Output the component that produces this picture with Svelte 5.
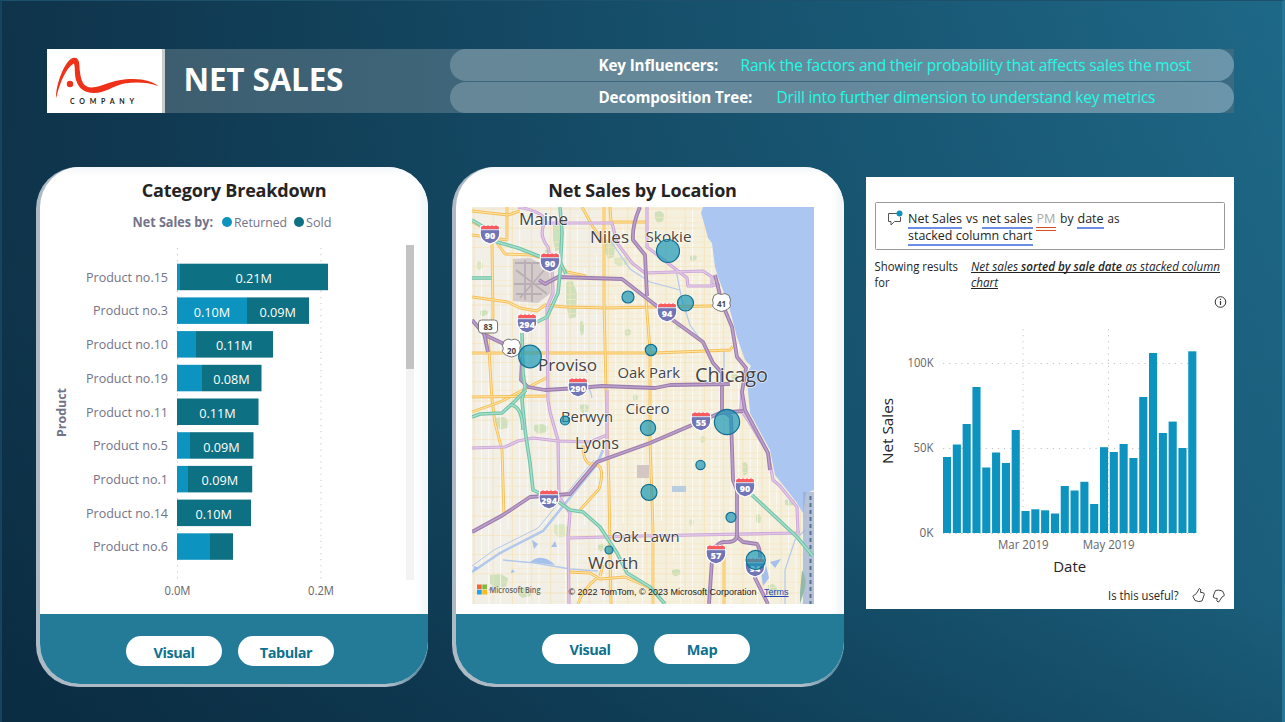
<script>
  const products = [
    { name: 'Product no.15', len: 82, ret: 3, end: 151, label: '0.21M' },
    { name: 'Product no.3', len: 75, ret: 70, end: 132, retLabel: '0.10M', label: '0.09M' },
    { name: 'Product no.10', len: 82, ret: 19, end: 96, label: '0.11M' },
    { name: 'Product no.19', len: 82, ret: 25, end: 84.5, label: '0.08M' },
    { name: 'Product no.11', len: 82, ret: 0, end: 81.5, label: '0.11M' },
    { name: 'Product no.5', len: 75, ret: 13, end: 76.5, label: '0.09M' },
    { name: 'Product no.1', len: 75, ret: 11, end: 75.2, label: '0.09M' },
    { name: 'Product no.14', len: 82, ret: 0, end: 74, label: '0.10M' },
    { name: 'Product no.6', len: 75, ret: 33, end: 56, label: '' },
  ];

  const tops = [457, 444.5, 424, 387, 467.5, 452.5, 463, 430, 511, 509.3, 510.3, 513.5, 486, 490.5, 481.8, 504, 447.2, 452, 444, 458, 397, 353, 433, 421.6, 448, 351.3];

  const streetsV = Array.from({ length: 54 }, (_, i) => ({ x: 474 + i * 6.4 + ((i * 7) % 3), y1: 207 + ((i * 53) % 120) * (i % 3 ? 1 : 0), y2: 604 - ((i * 37) % 110) * (i % 2) }));
  const streetsH = Array.from({ length: 62 }, (_, i) => ({ y: 209 + i * 6.4 + ((i * 5) % 3), x1: 472 + ((i * 61) % 130) * (i % 3 ? 1 : 0), x2: 814 - ((i * 41) % 120) * (i % 2) }));

  const parks = [
    [553, 225, 8, 28], [566, 282, 11, 40], [605, 240, 10, 20], [614, 258, 16, 8], [480, 311, 8, 5], [496, 418, 13, 12],
    [534, 425, 14, 9], [554, 525, 15, 13], [490, 575, 18, 14], [518, 588, 14, 10], [506, 340, 7, 4], [676, 325, 6, 4],
    [655, 212, 9, 11], [690, 256, 7, 5], [742, 463, 6, 13], [700, 437, 6, 6], [756, 515, 5, 9], [731, 375, 8, 5],
    [580, 405, 9, 8], [689, 520, 5, 6], [768, 585, 9, 13], [785, 500, 10, 6], [625, 330, 6, 6], [477, 262, 6, 8],
    [545, 250, 5, 20], [598, 545, 8, 6], [672, 570, 9, 6], [700, 590, 8, 6], [633, 395, 5, 6], [580, 322, 4, 14],
  ];

  const yellow = [
    'M492 243 L493 317 L488 333 L492 400 L495 423 L502 450 L504 516',
    'M507 207 V240 L472 235', 'M472 211 L508 215 L520 211',
    'M497 243 L505 254 L532 255 L558 263 L567 272 L586 276',
    'M472 297 L508 302 L520 308 L537 311 L545 305 L565 307 L608 308 L655 307 L712 306',
    'M472 353 H655 L730 350 L733 346',
    'M582 207 L593 227 L604 242', 'M610 207 L611 222 H648',
    'M604 207 L604 300 L606 390 L609 490 L611 604',
    'M646 300 L650 350 L650 440 L653 530 L653 604',
    'M472 412 L500 402 L548 377', 'M472 397 L547 396',
    'M583 445 Q583 466 594 464 Q606 465 599 489 L580 510',
    'M568 572 L590 573 L600 579 L625 577 L650 588', 'M597 578 Q582 590 578 604', 'M600 576 L603 565',
    'M724 545 V604', 'M472 222 L492 232',
  ];
  const light = [
    'M518 207 Q545 212 545 222 Q538 235 548 247 L552 268 L553 293 L547 307 L548 400 L550 412 L558 440 L559 497 L570 513 L568 537 L569 604',
    'M472 448 L505 447 L518 441 L533 438 L558 441 L590 442 L607 435',
    'M570 538 L640 536 L800 533',
    'M547 223 H612 L617 243 L632 263 L645 273 L703 271 L712 277 V286 H688 L687 278 L660 257 L647 247 V207',
    'M712 285 H720', 'M607 390 V460',
    'M742 390 L741 410 L748 420 L768 453 L773 480 L780 486 L797 507 L798 533',
  ];
  const purple = [
    'M640 207 Q632 225 633 240 L645 255 L647 296',
    'M539 280 L545 284 L558 277 L622 279 L645 297 L658 307 L670 318 L703 342 L713 363 L722 373 L722 410 L731 417 L733 480 L737 490 L737 537 L743 542 L757 544 Q764 555 755 578 L768 604',
    'M715 275 L722 303 L732 327 L737 357 L746 368 L742 392 L745 410 L768 453 L770 470',
    'M472 320 L485 335 L502 343 L515 355', 'M484 333 L488 352',
    'M522 357 L521 380 L528 387 L545 390 L578 388 L602 386 L655 388 L670 385 L730 384',
    'M472 532 L503 515 L530 497 L570 494 L597 462 L650 443 L720 413 L743 411',
    'M737 535 Q737 543 724 542 Q714 543 712 560 L709 604',
  ];
  const teal = [
    'M472 220 L490 231 L497 242 L518 248 L541 257',
    'M560 207 L562 233 L560 273 L558 293 L547 317 L537 322',
    'M560 262 L566 274', 'M472 278 H492',
    'M522 333 L523 373 L525 387 L522 400 L525 430 L530 463 L533 490 L560 503 L570 510 L583 512 L600 527 L617 553 L627 573 L650 587 L665 604',
    'M472 417 L480 414 L502 413 L513 403 L526 390', 'M510 405 Q522 405 523 430',
    'M752 495 L797 537 L813 556',
  ];
  const places = [
    ['Maine', 519, 225, 17, 49], ['Niles', 590, 243, 17, 39], ['Skokie', 645.5, 242, 14.5, 46],
    ['Proviso', 538, 371, 17, 59], ['Oak Park', 617.5, 378, 14.5, 62.5], ['Chicago', 695, 382, 20, 73],
    ['Cicero', 625.5, 414, 14.5, 44], ['Berwyn', 561, 422, 14.5, 52], ['Lyons', 575, 449, 17, 44],
    ['Oak Lawn', 611.5, 542, 14.5, 68], ['Worth', 588, 569, 17, 50.5],
  ];
  const shields = [[490, 234, '90'], [550, 262, '90'], [527, 323, '294'], [667, 312, '94'], [578, 387, '290'], [701, 421, '55'], [549, 499, '294'], [745, 487, '90'], [716, 554, '57'], [755, 567, '94']];
  const bubbles = [[668, 251, 11.5], [628, 297, 6], [685.5, 303, 8], [530, 356.5, 11.3], [651, 350, 5.7], [727, 422, 12.6], [565, 420.5, 4.5], [648, 428, 7.6], [700.5, 465, 4.6], [649, 492.3, 8], [731, 517.3, 5], [609, 550, 4], [755.7, 560, 9.6]];
</script>

{#snippet label(text, x, y, size, len, anchor, cls)}
  <text {x} {y} font-size={size} textLength={len} lengthAdjust="spacingAndGlyphs" text-anchor={anchor} class={cls}>{text}</text>
{/snippet}

<div class="page">
  <header>
    <div class="logo">
      <svg width="118" height="64" viewBox="47 49 118 64">
        <path d="M56.200 98 C55 87 65 57.700 74.300 57.700 C80.500 57.700 79 66 80 72 C81 81 83.500 87.500 91.700 87.500 C103 87 112 79 133 79 C145 79 153 82 158.500 86 C147 82 136 81.700 124 83.500 C112 86.500 105 93 94 93 C84 93 78.500 88 76 80 C74.200 74 75.500 66 73.800 63.500 C66 68 60 82 56.200 98Z" fill="#ee3118" />
        <circle cx="70" cy="84" r="3.200" fill="#ee3118" />
        <text x="70" y="104" font-size="7" textLength="64" class="company">COMPANY</text>
        <rect x="162" y="49" width="3" height="64" fill="#c9cacc" />
      </svg>
    </div>
    <h1>NET SALES</h1>
    <div class="pills">
      <p><b style="width:142px">Key Influencers:</b><span class="first">Rank the factors and their probability that affects sales the most</span></p>
      <p><b style="width:178px">Decomposition Tree:</b><span class="second">Drill into further dimension to understand key metrics</span></p>
    </div>
  </header>

  <main>
    <section class="card">
      <div class="inner">
        <div class="body">
          <h2 class="cat">Category Breakdown</h2>
          <svg width="388" height="407" viewBox="40 207 388 407">
            {@render label('Net Sales by:', 132.500, 227, 13.300, 80.500, 'start', 'muted bold')}
            <circle cx="227" cy="222" r="5" fill="#0d93bf" />
            {@render label('Returned', 234, 227, 13, 53, 'start', 'muted')}
            <circle cx="299" cy="222" r="5" fill="#0d7083" />
            {@render label('Sold', 306, 227, 13, 25.500, 'start', 'muted')}
            <path d="M177.500 248 V581 M321 248 V581" stroke="#c4c4c4" stroke-dasharray="1.200 4.900" />
            {#each products as p, i}
              {@const y = 263.700 + i * 33.700}
              {@render label(p.name, 168, y + 18, 13, p.len, 'end', 'muted')}
              <rect x="177" {y} width={p.ret} height="26.500" fill="#0d93bf" />
              <rect x={177 + p.ret} {y} width={p.end - p.ret} height="26.500" fill="#0d7083" />
              {#if p.retLabel}{@render label(p.retLabel, 212, y + 19.300, 12.700, 36.500, 'middle', 'white')}{/if}
              {#if p.label}{@render label(p.label, 176.700 + (p.ret + p.end) / 2, y + 19.300, 12.700, 36.500, 'middle', 'white')}{/if}
            {/each}
            {@render label('0.0M', 177.500, 595, 12, 26, 'middle', 'muted axis')}
            {@render label('0.2M', 321, 595, 12, 26, 'middle', 'muted axis')}
            <text transform="translate(66 437) rotate(-90)" font-size="13" textLength="49" lengthAdjust="spacingAndGlyphs" class="muted bold">Product</text>
            <rect x="406" y="245" width="8" height="335" fill="#f3f3f3" />
            <rect x="406" y="245" width="8" height="124" fill="#c3c3c3" />
          </svg>
        </div>
        <footer class="foot-a"><button>Visual</button><button>Tabular</button></footer>
      </div>
    </section>

    <section class="card">
      <div class="inner">
        <div class="body">
          <h2 class="loc">Net Sales by Location</h2>
          <svg class="map" width="342" height="397" viewBox="472 207 342 397">
            <rect x="472" y="207" width="342" height="397" fill="#f2efe6" />
            <path d="M600 207 H710 L800 520 V604 H620Z" fill="#f7f0da" opacity=".7" />
            {#each parks as [x, y, w, h], i}
              <path d="M{x} {y} l{w * .6} -1 l{w * .4} {h * .3} l{-w * .1} {h * .6} l{-w * .6} 2 l{-w * .3} {-h * .4}z" fill={i % 4 === 3 ? '#d7e4bc' : '#c9ddb4'} opacity=".85" />
            {/each}
            {#each streetsV as s, i}
              <path d="M{s.x} {s.y1} V{s.y2}" stroke={i % 3 ? '#ffffff' : '#f6e2b4'} stroke-width=".9" opacity=".85" />
            {/each}
            {#each streetsH as s, i}
              <path d="M{s.x1} {s.y} H{s.x2}" stroke={i % 3 ? '#f7e8c4' : '#f6e2b4'} stroke-width=".8" opacity=".85" />
            {/each}
            <path d="M513 259 L530 258 L549 268 L551 293 L538 303 L513 301Z" fill="#d4cbcb" />
            <path d="M515 263 H545 M516 270 L547 294 M520 298 L546 268 M525 260 V300 M514 284 H548 M532 262 V302 M516 294 H542" stroke="#b9aeb3" stroke-width="1.800" fill="none" />
            <path d="M672 486 h14 v6 h-14z" fill="#b9cde0" /><path d="M637 465 h12 v13 h-12z" fill="#d3c6c5" />
            <g fill="none" stroke="#b3c9ec">
              <path d="M472 572 L500 553 L543 531 L597 464 L603 450" stroke-width="2.600" />
              <path d="M472 566 L494 550 L538 528 L594 460" stroke-width="1" />
              <path d="M503 560 L535 563 L570 569 L598 571" stroke-width="1.500" />
              <path d="M577 390 q8 6 10 0 t5 8 M579 364 q8 4 8 9 M676 270 L682 300 L690 325 L708 350 M610 240 L630 269 L650 282 L680 290 M724 350 V370 M785 604 V570 L795 540 L805 530" stroke-width="1.200" />
            </g>
            <path d="M530 562 Q542 552 555 565Z M532 540 l6 4 -4 5z M551 547 l4 -6 2 6z M512 569 l3 3 -4 1z M474 566 l5 2 -6 4z M488 590 l5 -4 1 5z M765 560 l4 18 -6 8 -2 -14z M770 562 l11 -3 -6 9z" fill="#a5c0eb" />
            <path d="M703 207 L701 213 L704 223 L708 238 L712 243 L715 267 L718 277 L728 303 L737 337 L745 360 L751 366 L746 375 L748 390 L750 413 L770 450 L775 475 L787 490 L797 503 L803 513 L806 493 L814 490 V207Z" fill="#abc6f1" />
            <path d="M803 492 H814 V604 H803Z" fill="#93aad2" opacity=".65" />
            <path d="M802 570 q5 8 3 18 l-5 16 v-12z" fill="#94b9a9" />
            <path d="M810.500 496 V604" stroke="#5e7190" stroke-width="2" stroke-dasharray="4 3" />
            <g fill="none" stroke-linejoin="round">
              {#each yellow as d}<path {d} stroke="#f5bf58" stroke-width="2.900" /><path {d} stroke="#ffe6a8" stroke-width="1.100" />{/each}
              {#each light as d}<path {d} stroke="#c9a5d4" stroke-width="3.200" /><path {d} stroke="#e2c6e8" stroke-width="1.500" />{/each}
              {#each purple as d}<path {d} stroke="#9b7dac" stroke-width="3.800" /><path {d} stroke="#bd9fcb" stroke-width="1.700" />{/each}
              {#each teal as d}<path {d} stroke="#71c2a9" stroke-width="3.600" /><path {d} stroke="#a5dfca" stroke-width="1.500" />{/each}
            </g>
            {#each shields as [x, y, n]}
              <g transform="translate({x} {y})">
                <path d="M-9 -8 Q-5 -9 0 -8 Q5 -9 9 -8 Q12 4 5 8 L0 10 L-5 8 Q-12 4 -9 -8Z" fill="#7175b5" stroke="#fff" stroke-width="1.300" />
                <path d="M-8.500 -7.500 L-6 -8.800 L-4 -7.800 L-2 -8.800 L0 -7.800 L2 -8.800 L4 -7.800 L6 -8.800 L8.500 -7.500 L9 -4.700 H-9Z" fill="#fb5a5c" />
                <path d="M-9 -4.300 H9" stroke="#fff" stroke-width=".8" />
                <text y="4.500" text-anchor="middle" class="route">{n}</text>
              </g>
            {/each}
            <rect x="478.500" y="320" width="19" height="13" rx="3" class="sign" /><text x="488" y="330" class="us">83</text>
            <path d="M504 341 l4 -2 3.500 1 3.500 -1 4 2 1.500 4.500 q-1.500 3 0 6 q-2 4 -9 5.500 q-7 -1.500 -9 -5.500 q1.500 -3 0 -6z" class="sign" /><text x="511.500" y="353.500" class="us">20</text>
            <path d="M714 295.500 l4 -2 3.500 1 3.500 -1 4 2 1.500 4.500 q-1.500 3 0 6 q-2 4 -9 5.500 q-7 -1.500 -9 -5.500 q1.500 -3 0 -6z" class="sign" /><text x="721.500" y="307" class="us">41</text>
            {#each places as [name, x, y, size, len]}{@render label(name, x, y, size, len, 'start', 'place')}{/each}
            {#each bubbles as [x, y, r]}<circle cx={x} cy={y} {r} fill="#1396b7" fill-opacity=".68" stroke="#136f91" stroke-width="1.200" />{/each}
            <rect x="477" y="584.500" width="4.700" height="4.700" fill="#f1653a" /><rect x="482.300" y="584.500" width="4.700" height="4.700" fill="#80b93c" />
            <rect x="477" y="589.800" width="4.700" height="4.700" fill="#18a5ed" /><rect x="482.300" y="589.800" width="4.700" height="4.700" fill="#fcbb16" />
            {@render label('Microsoft Bing', 489.500, 593, 9, 51, 'start', 'bing')}
            {@render label('© 2022 TomTom, © 2023 Microsoft Corporation', 568.500, 595, 9, 188, 'start', 'copy')}
            {@render label('Terms', 764, 595, 9, 24.500, 'start', 'copy terms')}
            <path d="M764 596.500 h24.500" stroke="#2846b3" />
          </svg>
        </div>
        <footer class="foot-b"><button>Visual</button><button>Map</button></footer>
      </div>
    </section>

    <section class="qna">
      <svg width="368" height="432" viewBox="866 177 368 432">
        <rect x="875.500" y="202.500" width="349" height="47" rx="1" fill="#fff" stroke="#999" />
        <path d="M897 213.500 H888.500 V221.500 H891 V225 L894.500 221.500 H900.500 V217" fill="none" stroke="#555" />
        <circle cx="899.500" cy="213.500" r="3" fill="#0d93bf" />
        {@render label('Net Sales', 908, 223, 13.300, 54, 'start', 'dark')}
        {@render label('vs', 966, 223, 13.300, 12, 'start', 'dark')}
        {@render label('net sales', 982, 223, 13.300, 50.500, 'start', 'dark')}
        {@render label('PM', 1036.500, 223, 13.300, 19, 'start', 'pale')}
        {@render label('by', 1060, 223, 13.300, 13.500, 'start', 'dark')}
        {@render label('date', 1077.500, 223, 13.300, 26, 'start', 'dark')}
        {@render label('as', 1107.500, 223, 13.300, 12, 'start', 'dark')}
        {@render label('stacked column chart', 908, 240, 13.300, 124.500, 'start', 'dark')}
        <path d="M908 228 h54 M982 228 h51 M1077 228 h27 M908 245 h125" stroke="#6b8ee6" stroke-width="2" />
        <path d="M1036 227.500 h20 M1036 230.500 h20" stroke="#d64e1f" />
        {@render label('Showing results', 874.500, 271, 12, 83.500, 'start', 'dark')}
        {@render label('for', 874.500, 287, 12, 15, 'start', 'dark')}
        {@render label('Net sales', 971, 271, 12, 47, 'start', 'dark ital')}
        {@render label('sorted by sale date', 1021, 271, 12, 101, 'start', 'dark ital semi')}
        {@render label('as stacked column', 1125.500, 271, 12, 94.500, 'start', 'dark ital')}
        {@render label('chart', 971, 287, 12, 27, 'start', 'dark ital')}
        <path d="M971 272.500 h249 M971 288.500 h27" stroke="#252423" />
        <circle cx="1220.500" cy="302" r="5.300" fill="none" stroke="#333" />
        <path d="M1220.500 301 v4 M1220.500 298.800 v1.200" stroke="#333" stroke-width="1.200" />

        <path d="M943 363.500 H1197 M943 448.500 H1197 M943 533.500 H1197 M1023 329 V533 M1108.500 329 V533" stroke="#c4c4c4" stroke-dasharray="1.200 4.900" />
        {#each tops as top, i}<rect x={943 + i * 9.810} y={top} width="8.100" height={533 - top} fill="#0d93bf" />{/each}
        {@render label('100K', 933.500, 367, 12, 26, 'end', 'tick')}
        {@render label('50K', 933.500, 452, 12, 20, 'end', 'tick')}
        {@render label('0K', 933.500, 537, 12, 14, 'end', 'tick')}
        {@render label('Mar 2019', 1023.300, 549, 12, 50.500, 'middle', 'tick')}
        {@render label('May 2019', 1108.700, 549, 12, 52, 'middle', 'tick')}
        {@render label('Date', 1069.700, 572, 15, 33, 'middle', 'dark')}
        <text transform="translate(893 464) rotate(-90)" font-size="15" textLength="66" lengthAdjust="spacingAndGlyphs" class="dark">Net Sales</text>
        {@render label('Is this useful?', 1108, 600, 12, 70.500, 'start', 'dark')}
        <path d="M1193 596.500 L1195 600.500 Q1199 602.300 1202 601 L1204.300 594.500 Q1204.500 592.500 1202 592.500 H1200.500 Q1201.500 589.500 1199.500 588.500 Q1198.500 588.500 1198 591 L1195.500 594.500 L1193.300 595.500Z" fill="none" stroke="#444" />
        <path d="M1224 594 L1222.500 591 Q1218.500 589.500 1215.500 590.500 L1213.300 596 Q1213 598 1215.500 598.300 H1217.200 Q1216 601.500 1218 602 Q1219.500 602 1220 600 L1222 597 L1224.300 595.500Z" fill="none" stroke="#444" />
      </svg>
    </section>
  </main>
</div>

<style>
  :global(body) { margin: 0; overflow: hidden; }
  .page {
    box-sizing: border-box; width: 1285px; height: 722px; padding: 48px 0 0 45px;
    border-top: 1px solid #1d506b; border-right: 3px solid #25779a; border-left: 2px solid #16445e;
    font-family: "Open Sans", "Noto Sans", sans-serif;
    background: linear-gradient(192deg, #1f6e8f00 0%, #092a3f30 60%, #08273cb0 100%), linear-gradient(96deg, #0f344b 0%, #17536f 52%, #1f6b8a 100%);
  }
  header { display: flex; width: 1187px; height: 64px; background: linear-gradient(90deg, #3c5b6b, #3f677c 40%, #3a6b83); }
  .logo { width: 118px; height: 64px; background: #fff; }
  .company { font-family: Lato, sans-serif; font-weight: 700; fill: #222; }
  h1 { box-sizing: border-box; margin: 0; width: 266px; padding: 8px 0 0 18.500px; font-size: 31.500px; line-height: 44px; color: #fff; letter-spacing: -.2px; font-weight: 700; white-space: nowrap; }
  .pills { display: flex; flex-direction: column; gap: 1px; margin-left: auto; flex: none; width: 784px; }
  .pills p { box-sizing: border-box; display: flex; height: 31.500px; margin: 0; padding-left: 148.500px; border-radius: 16px; background: linear-gradient(90deg, #658797, #65899c 50%, #6b95aa); line-height: 32px; white-space: nowrap; }
  .pills p:last-child { line-height: 30px; }
  .pills b { color: #fff; font-size: 15.200px; letter-spacing: -.12px; }
  .pills span { color: #21fbe3; font-size: 15.500px; }
  .first { letter-spacing: -.18px; }
  .second { letter-spacing: -.21px; }
  main { display: flex; align-items: flex-start; margin: 54px 0 0 -11px; }
  .card { box-sizing: border-box; width: 392px; height: 520px; padding: 0 0 3px 4px; margin-right: 24px; background: linear-gradient(90deg, #adb9c4, #aebdc9 90%, #477d93); border-radius: 42px; flex: none; }
  .inner { height: 517px; overflow: hidden; border-radius: 40px 40px 42px 40px; background: #fff; }
  .body { height: 447px; overflow: hidden; box-shadow: inset -8px 5px 6px #f3f7fa; }
  h2 { margin: 0; height: 40px; line-height: 46px; text-align: center; font-size: 18px; color: #252423; font-weight: 700; letter-spacing: -.18px; }
  .loc { padding-right: 15px; }
  .map { display: block; margin-left: 16px; }
  footer { display: flex; gap: 16px; height: 70px; box-sizing: border-box; background: #247b98; }
  .foot-a { padding: 22px 0 0 86px; }
  .foot-b { padding: 20px 0 0 86px; }
  button { width: 96px; height: 30px; padding: 0; border: 0; border-radius: 15px; background: #fff; color: #0d7190; font: 700 14.500px/31px "Open Sans", sans-serif; letter-spacing: -.45px; }
  .foot-a button { padding-top: 1px; }
  .qna { width: 368px; height: 432px; margin: 10px 0 0 -2px; background: #fff; flex: none; }
  svg { display: block; }
  .muted { fill: #73738a; }
  .axis, .tick { fill: #65656c; }
  .bold { font-weight: 700; }
  .white { fill: #fff; }
  .dark { fill: #252423; }
  .pale { fill: #a8a8a8; }
  .ital { font-style: italic; }
  .semi { font-weight: 600; }
  .place { fill: #444; stroke: #fff; stroke-width: 1.500px; stroke-opacity: .7; paint-order: stroke; }
  .route { fill: #fff; font: 800 9px "Open Sans", sans-serif; }
  .sign { fill: #fff; stroke: #777; stroke-width: 1; }
  .us { fill: #444; font: 700 8px "Open Sans", sans-serif; text-anchor: middle; }
  .bing { fill: #666; font-weight: 600; }
  .copy { fill: #222; font-family: "Liberation Sans", sans-serif; }
  .terms { fill: #2846b3; }
</style>
